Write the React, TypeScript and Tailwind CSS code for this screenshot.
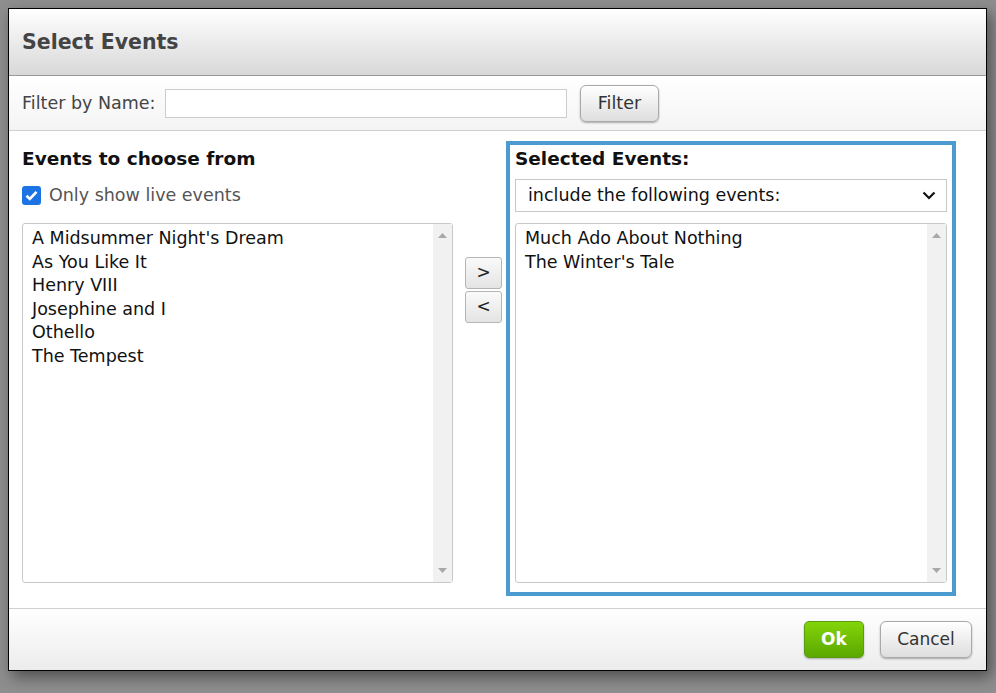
import React from 'react'

const available = [
	"A Midsummer Night's Dream",
	'As You Like It',
	'Henry VIII',
	'Josephine and I',
	'Othello',
	'The Tempest',
]

const chosen = ['Much Ado About Nothing', "The Winter's Tale"]

function ListBox({ items }: { items: string[] }) {
	return (
		<div className="flex h-[360px] rounded-[3px] border border-[#c8c8c8] bg-white">
			<ul className="flex-1 px-[9px] pt-[3px] text-[17.5px] leading-[23.6px] text-[#111]">
				{items.map((item) => (
					<li key={item}>{item}</li>
				))}
			</ul>
			<div className="flex w-[19px] flex-col items-center justify-between bg-[#f1f1f1] py-[9px]">
				<svg width="9" height="5" viewBox="0 0 9 5">
					<path d="M0 5 L4.5 0 L9 5 Z" fill="#a8a8a8" />
				</svg>
				<svg width="9" height="5" viewBox="0 0 9 5">
					<path d="M0 0 L4.5 5 L9 0 Z" fill="#a8a8a8" />
				</svg>
			</div>
		</div>
	)
}

function MoveButton({ label }: { label: string }) {
	return (
		<button className="flex h-[32px] w-[37px] items-center justify-center rounded-[3px] border border-[#b5b5b5] bg-gradient-to-b from-[#fafafa] to-[#e4e4e4] text-[17px] text-[#222]">
			{label}
		</button>
	)
}

export default function App() {
	return (
		<div
			className="h-screen w-full overflow-hidden bg-[#8e8e8e] pl-[8px] pt-[8px]"
			style={{ fontFamily: '"DejaVu Sans", Verdana, sans-serif' }}
		>
			<div className="flex w-[979px] flex-col border border-black bg-white shadow-[4px_6px_14px_rgba(0,0,0,0.45)]">
				{/* header */}
				<div className="flex h-[67px] items-center border-b border-[#9a9a9a] bg-gradient-to-b from-[#ffffff] to-[#d8d8d8] px-[13px]">
					<h1 className="text-[20.5px] font-bold text-[#444]">Select Events</h1>
				</div>

				{/* filter row */}
				<div className="flex h-[55px] items-center border-b border-[#cfcfcf] bg-gradient-to-b from-[#ffffff] to-[#f4f4f4] px-[13px]">
					<span className="w-[143px] text-[17.5px] text-[#444]">Filter by Name:</span>
					<input className="h-[29px] w-[402px] border border-[#ccc] bg-white" />
					<button className="ml-[13px] h-[37px] w-[79px] rounded-[6px] border border-[#a9a9a9] bg-gradient-to-b from-[#ffffff] to-[#dedede] text-[17.5px] text-[#333] shadow-[0_1px_2px_rgba(0,0,0,0.3)]">
						Filter
					</button>
				</div>

				{/* body */}
				<div className="flex items-start pb-[12px] pl-[13px] pt-[10px]">
					<div className="flex w-[431px] flex-col pt-[4px]">
						<h2 className="flex h-[27px] items-center text-[18.5px] font-bold text-[#111]">
							Events to choose from
						</h2>
						<label className="mt-[7px] flex h-[33px] items-center gap-[8px] text-[17.5px] text-[#555]">
							<span className="flex h-[19px] w-[19px] items-center justify-center rounded-[3px] bg-[#1c74e4]">
								<svg width="13" height="11" viewBox="0 0 13 11">
									<path
										d="M1.5 5.8 L4.8 9 L11.5 1.8"
										fill="none"
										stroke="white"
										strokeWidth="2.6"
									/>
								</svg>
							</span>
							Only show live events
						</label>
						<div className="mt-[11px]">
							<ListBox items={available} />
						</div>
					</div>

					<div className="ml-[12px] mt-[116px] flex flex-col gap-[2px]">
						<MoveButton label=">" />
						<MoveButton label="<" />
					</div>

					<div className="ml-[4px] flex w-[450px] flex-col border-4 border-[#4b9bd1] px-[5px] pb-[9px]">
						<h2 className="flex h-[27px] items-center text-[18.5px] font-bold text-[#111]">
							Selected Events:
						</h2>
						<div className="mt-[7px] flex h-[33px] items-center justify-between border border-[#c8c8c8] bg-white pl-[12px] pr-[10px] text-[17.5px] text-[#111]">
							<span>include the following events:</span>
							<svg width="14" height="9" viewBox="0 0 14 9">
								<path d="M1.5 1.5 L7 7 L12.5 1.5" fill="none" stroke="#111" strokeWidth="2.2" />
							</svg>
						</div>
						<div className="mt-[11px]">
							<ListBox items={chosen} />
						</div>
					</div>
				</div>

				{/* footer */}
				<div className="flex h-[62px] items-center justify-end gap-[16px] border-t border-[#cfcfcf] bg-gradient-to-b from-[#ffffff] to-[#ececec] pr-[14px]">
					<button className="h-[37px] w-[60px] rounded-[5px] border border-[#5b9c12] bg-gradient-to-b from-[#84d40a] to-[#5aa800] text-[17px] font-bold text-white shadow-[0_1px_2px_rgba(0,0,0,0.3)]">
						Ok
					</button>
					<button className="h-[37px] w-[92px] rounded-[6px] border border-[#a9a9a9] bg-gradient-to-b from-[#ffffff] to-[#dedede] text-[17px] text-[#333] shadow-[0_1px_2px_rgba(0,0,0,0.3)]">
						Cancel
					</button>
				</div>
			</div>
		</div>
	)
}
